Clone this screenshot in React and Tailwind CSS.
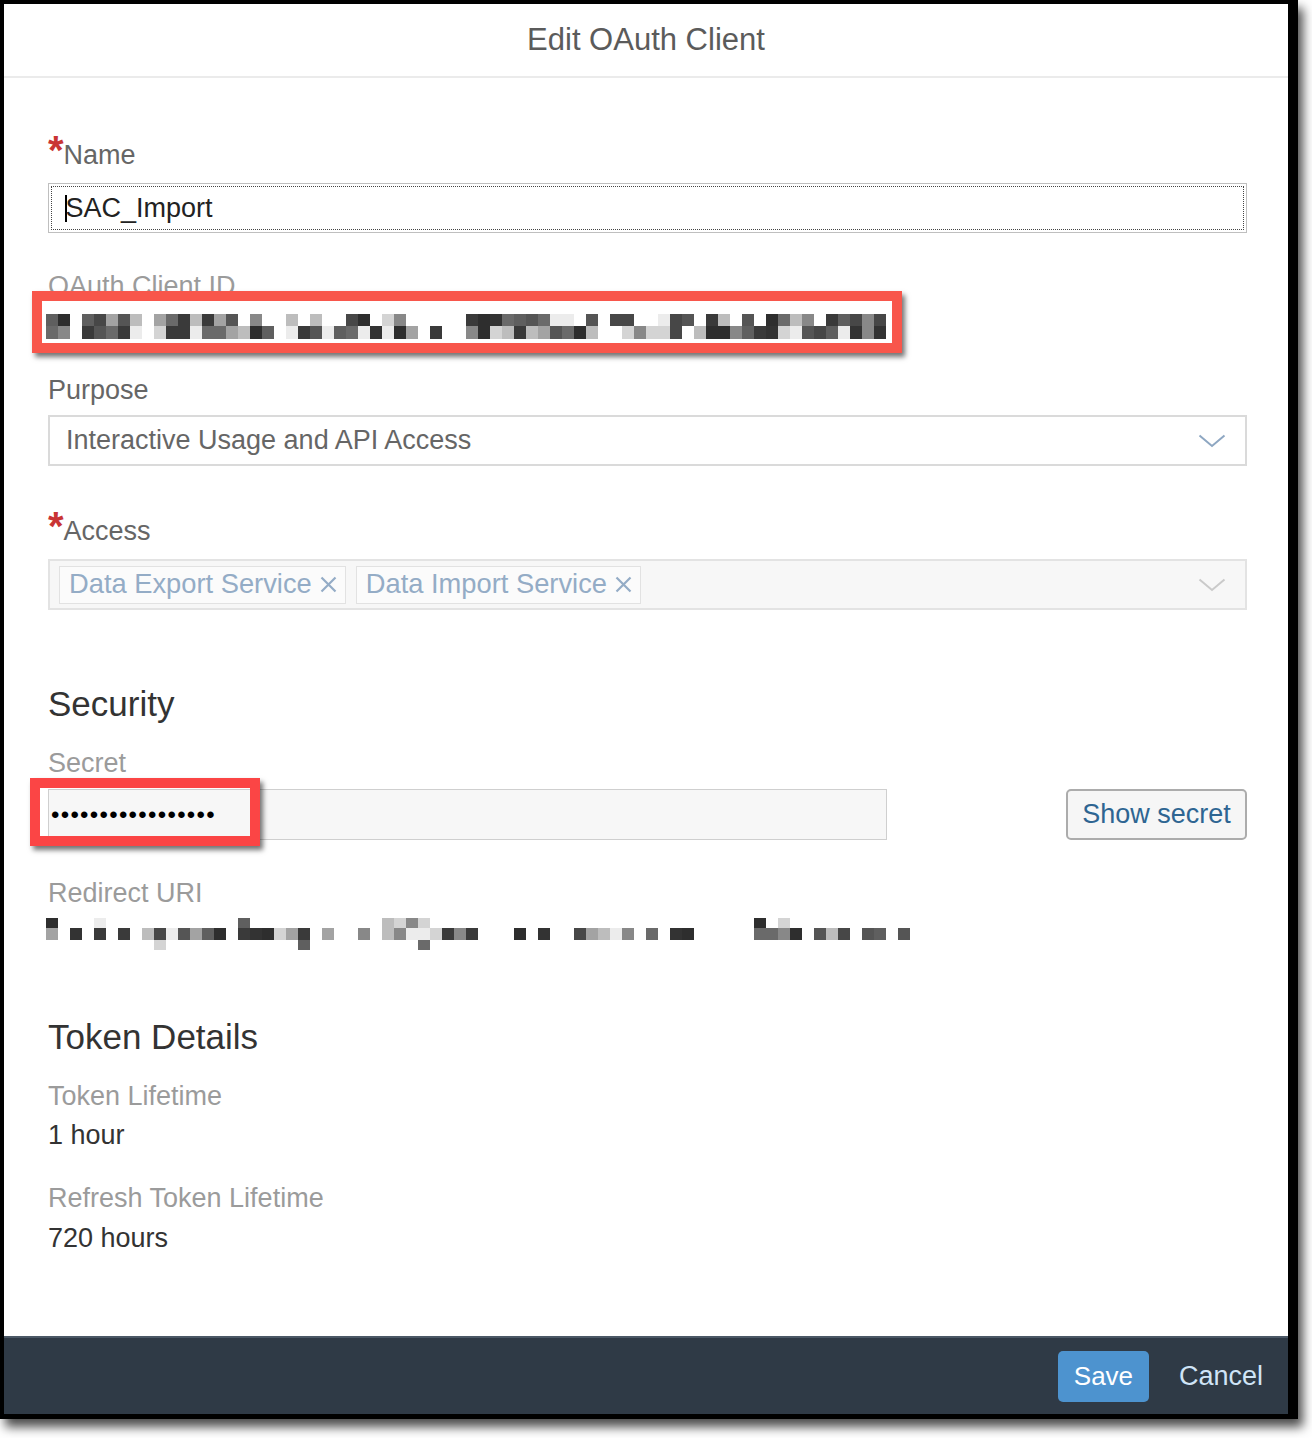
import React from 'react';

const FONT = { fontFamily: '"Liberation Sans", Arial, sans-serif' };

// seeded random so the blurred blocks are the same every render
function makeRand(seed) {
  let s = seed;
  return () => {
    s = (s * 16807) % 2147483647;
    return (s - 1) / 2147483646;
  };
}

const GRAYS = ['#2e2e2e', '#333333', '#3a3a3a', '#474747', '#555555', '#5f5f5f', '#6a6a6a', '#888888', '#a3a3a3', '#bdbdbd', '#d4d4d4', '#ececec'];

function Mosaic({ cols, cellW, rowHs, groups, seed, density }) {
  const rand = makeRand(seed);
  const inGroup = (c) => groups.some(([a, b]) => c >= a && c <= b);
  const rects = [];
  let y = 0;
  rowHs.forEach((h, r) => {
    for (let c = 0; c < cols; c++) {
      const v = rand();
      const g = rand();
      if (!inGroup(c) || v > density[r]) continue;
      rects.push(
        <rect key={`${r}-${c}`} x={c * cellW} y={y} width={cellW} height={h} fill={GRAYS[Math.floor(g * GRAYS.length)]} />
      );
    }
    y += h;
  });
  return (
    <svg width={cols * cellW} height={y} className="block">
      {rects}
    </svg>
  );
}

const Chevron = ({ color }) => (
  <svg width="28" height="14" viewBox="0 0 28 14">
    <polyline points="1.5,1.5 14,12 26.5,1.5" fill="none" stroke={color} strokeWidth="2" />
  </svg>
);

const Cross = () => (
  <svg width="17" height="17" viewBox="0 0 17 17">
    <path d="M1.5 1.5 L15.5 15.5 M15.5 1.5 L1.5 15.5" stroke="#94acc6" strokeWidth="2.2" />
  </svg>
);

function Label({ children, required, muted, className = '' }) {
  return (
    <div className={`flex items-baseline text-[27px] leading-[32px] ${muted ? 'text-[#9b9b9b]' : 'text-[#666]'} ${className}`}>
      {required && <span className="text-[40px] font-bold leading-[32px] text-[#c93434]">*</span>}
      <span>{children}</span>
    </div>
  );
}

function Token({ text }) {
  return (
    <div className="h-[38px] border border-[#e2e2e2] bg-[#fbfbfb] pl-[9px] pr-[8px] flex items-center gap-[8px] text-[27.3px] text-[#94acc6]">
      <span>{text}</span>
      <Cross />
    </div>
  );
}

export default function App() {
  return (
    <div className="relative w-[1312px] h-[1438px] bg-white" style={FONT}>
      <div className="w-[1298px] h-[1419px] border-l-4 border-t-4 border-r-[10px] border-b-[5px] border-black bg-white flex flex-col shadow-[5px_8px_10px_rgba(0,0,0,0.7)]">
        <div className="h-[74px] shrink-0 border-b-2 border-[#ebebeb] flex items-center justify-center text-[31px] text-[#5b5b5b]">
          Edit OAuth Client
        </div>

        <div className="flex-1 pl-[44px] pr-[41px] pt-[56px]">
          <Label required>Name</Label>
          <div className="mt-[12px] h-[50px] border border-[#bfbfbf] p-[2px]">
            <div className="h-full border border-dotted border-[#444] flex items-center pl-[13px] text-[27px] text-[#222]">
              <span className="w-[1.5px] h-[27px] bg-black" />
              <span className="-ml-[1px]">SAC_Import</span>
            </div>
          </div>

          <Label muted className="mt-[37px]">OAuth Client ID</Label>
          <div className="mt-[12px] -ml-[2px]">
            <Mosaic
              cols={70}
              cellW={12}
              rowHs={[12, 13]}
              seed={11}
              density={[0.85, 0.95]}
              groups={[[0, 1], [3, 7], [9, 13], [14, 18], [20, 25], [26, 30], [32, 32], [35, 47], [48, 51], [52, 59], [60, 63], [64, 69]]}
            />
          </div>

          <Label className="mt-[35px]">Purpose</Label>
          <div className="mt-[9px] h-[51px] border-2 border-[#dadada] flex items-center justify-between pl-[16px] pr-[19px] text-[27px] text-[#666]">
            <span>Interactive Usage and API Access</span>
            <Chevron color="#8ea7c2" />
          </div>

          <Label required className="mt-[44px]">Access</Label>
          <div className="mt-[12px] h-[51px] border-2 border-[#e3e3e3] bg-[#f7f7f7] flex items-center pl-[9px] pr-[19px] gap-[10px]">
            <Token text="Data Export Service" />
            <Token text="Data Import Service" />
            <div className="ml-auto">
              <Chevron color="#cacaca" />
            </div>
          </div>

          <div className="mt-[74px] text-[35px] leading-[40px] text-[#333]">Security</div>
          <Label muted className="mt-[23px]">Secret</Label>
          <div className="mt-[10px] flex items-center justify-between">
            <div className="w-[839px] h-[51px] border border-[#cfcfcf] bg-[#f7f7f7] flex items-center pl-[2px] text-[24px] tracking-[1.3px] text-black">
              •••••••••••••••••
            </div>
            <button className="w-[181px] h-[51px] border-2 border-[#acacac] rounded-[5px] bg-[#f6f6f6] text-[27px] text-[#2e6592] flex items-center justify-center">
              Show secret
            </button>
          </div>

          <Label muted className="mt-[37px]">Redirect URI</Label>
          <div className="mt-[9px] -ml-[2px]">
            <Mosaic
              cols={72}
              cellW={12}
              rowHs={[10, 12, 10]}
              seed={31}
              density={[0.2, 0.97, 0.04]}
              groups={[[0, 0], [2, 2], [4, 4], [6, 6], [8, 14], [16, 21], [23, 23], [26, 26], [28, 35], [37, 37], [39, 39], [41, 41], [44, 48], [50, 53], [58, 62], [64, 66], [68, 69], [71, 71]]}
            />
          </div>

          <div className="mt-[67px] text-[35px] leading-[40px] text-[#333]">Token Details</div>
          <Label muted className="mt-[23px]">Token Lifetime</Label>
          <div className="mt-[7px] text-[27px] leading-[32px] text-[#333]">1 hour</div>
          <Label muted className="mt-[31px]">Refresh Token Lifetime</Label>
          <div className="mt-[8px] text-[27px] leading-[32px] text-[#333]">720 hours</div>
        </div>

        <div className="h-[78px] shrink-0 border-t-2 border-[#4b5866] bg-[#2f3a46] flex items-center justify-end pr-[25px] gap-[30px]">
          <button className="w-[91px] h-[51px] rounded-[5px] bg-[#4d93cf] text-white text-[26px] flex items-center justify-center">
            Save
          </button>
          <button className="text-[27px] text-[#cfe4f7]">Cancel</button>
        </div>
      </div>

      {/* annotation boxes drawn over the screenshot */}
      <div className="absolute left-[32px] top-[291px] w-[870px] h-[62px] border-[10px] border-[#f8564b] shadow-[3px_4px_5px_rgba(0,0,0,0.55)]" />
      <div className="absolute left-[30px] top-[778px] w-[230px] h-[68px] border-[10px] border-[#fb4545] shadow-[3px_4px_5px_rgba(0,0,0,0.55)]" />
    </div>
  );
}
